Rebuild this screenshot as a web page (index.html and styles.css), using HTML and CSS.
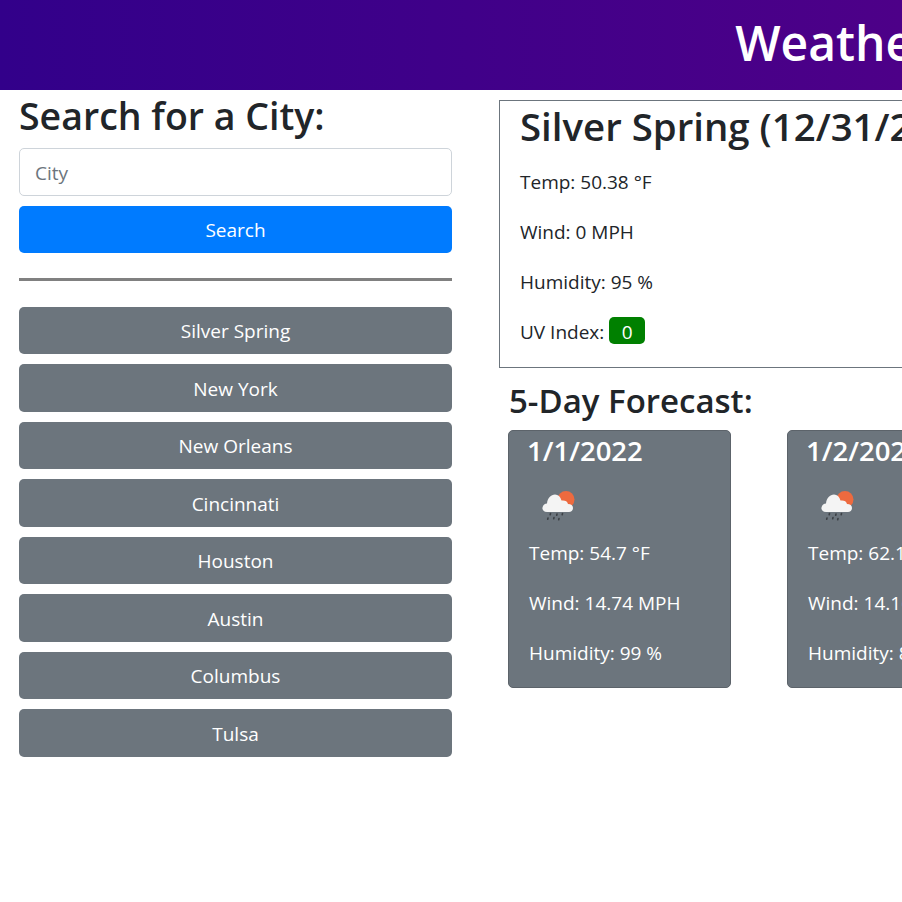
FILE: index.html
```html
<!DOCTYPE html>
<html lang="en">
<head>
    <meta charset="UTF-8">
    <meta name="viewport" content="width=device-width, initial-scale=1.0">
    <title>Weather Dashboard</title>
    <link rel="stylesheet" href="styles.css">
</head>
<body>

    <!-- ======= Header ======= -->
    <header class="page-header">
        <h1>Weather Dashboard</h1>
    </header>

    <main class="page-main">
        <!-- ======= Search ======= -->
        <section class="search-col">
            <h2 class="search-title">Search for a City:</h2>
            <form class="search-form">
                <input class="city-input" type="text" placeholder="City">
                <button class="btn btn-blue" type="button">Search</button>
            </form>
            <hr class="divider">
            <div class="history">
                <button class="btn btn-grey" type="button">Silver Spring</button>
                <button class="btn btn-grey" type="button">New York</button>
                <button class="btn btn-grey" type="button">New Orleans</button>
                <button class="btn btn-grey" type="button">Cincinnati</button>
                <button class="btn btn-grey" type="button">Houston</button>
                <button class="btn btn-grey" type="button">Austin</button>
                <button class="btn btn-grey" type="button">Columbus</button>
                <button class="btn btn-grey" type="button">Tulsa</button>
            </div>
        </section>

        <!-- ======= Weather ======= -->
        <section class="weather-col">
            <div class="current">
                <h2 class="current-title">Silver Spring (12/31/2021)</h2>
                <p>Temp: 50.38 °F</p>
                <p>Wind: 0 MPH</p>
                <p>Humidity: 95 %</p>
                <p>UV Index: <span class="uv">0</span></p>
            </div>

            <h3 class="forecast-title">5-Day Forecast:</h3>
            <div class="forecast">
                <div class="card">
                    <h3 class="card-date">1/1/2022</h3>
                    <svg class="card-icon" viewBox="0 0 50 50">
                        <use href="#rain-icon"></use>
                    </svg>
                    <p>Temp: 54.7 °F</p>
                    <p>Wind: 14.74 MPH</p>
                    <p>Humidity: 99 %</p>
                </div>
                <div class="card">
                    <h3 class="card-date">1/2/2022</h3>
                    <svg class="card-icon" viewBox="0 0 50 50">
                        <use href="#rain-icon"></use>
                    </svg>
                    <p>Temp: 62.1 °F</p>
                    <p>Wind: 14.16 MPH</p>
                    <p>Humidity: 89 %</p>
                </div>
            </div>
        </section>
    </main>

    <svg class="icon-defs" width="0" height="0">
        <symbol id="rain-icon" viewBox="0 0 50 50">
            <circle cx="38" cy="19.500" r="8.500" fill="#ed6a3f"/>
            <path d="M19 32C15.500 32 14 29.500 14.500 27.500 15 25 17 23.500 19 23.500 19.500 18 23 14.500 27 14.500 30 14.500 32.500 16.500 33.500 20.500 36.500 20 39.500 21 40 24 43 24 45 25.500 45 28 45 30.500 43 32 41 32Z" fill="#f4f4f4"/>
            <path d="M22.500 33.500l-.3 1.200M29 34l-.3 1.200M34.500 33.500l-.3 1.200M20 38l-.3 1.200M26 37.500l-.3 1.200M31 38.500l-.3 1.200" stroke="#3c4045" stroke-width="1.600" stroke-linecap="round" fill="none"/>
        </symbol>
    </svg>
</body>
</html>
```

FILE: styles.css
```css
html {
    overflow: hidden;
}

body {
    font-family: "Open Sans", Arial, sans-serif;
    margin: 0;
    width: 1936px;
    color: #212529;
    background-color: white;
}

h1, h2, h3, p {
    margin: 0;
}

.page-header {
    height: 90px;
    display: flex;
    align-items: center;
    justify-content: center;
    color: white;
    background: linear-gradient(to right, #32008a, #4d0088 902px);
}

.page-header h1 {
    font-size: 48px;
    font-weight: 600;
    line-height: 1.2;
    margin-bottom: 4px;
}

.page-main {
    display: flex;
}

/* ======= Search ======= */
.search-col {
    width: 433px;
    padding: 1px 20px 0 19px;
    flex-shrink: 0;
}

.search-title {
    font-size: 37.5px;
    font-weight: 600;
    line-height: 50px;
    margin-bottom: 7px;
}

.search-form {
    display: flex;
    flex-direction: column;
    gap: 10px;
}

.city-input {
    height: 48px;
    box-sizing: border-box;
    padding: 10px 15px 8px;
    font-family: inherit;
    font-size: 19px;
    border: 1px solid #ced4da;
    border-radius: 5px;
}

.city-input::placeholder {
    color: #6c757d;
}

.btn {
    display: block;
    width: 100%;
    height: 47.5px;
    padding: 1px 16px 0;
    font-family: inherit;
    font-size: 19px;
    color: white;
    border: none;
    border-radius: 5px;
}

.btn-blue {
    height: 47.25px;
    background-color: #007bff;
}

.btn-grey {
    background-color: #6c757d;
}

.divider {
    height: 3px;
    margin: 25px 0 25.5px;
    border: none;
    background-color: #808080;
}

.history {
    display: flex;
    flex-direction: column;
    gap: 10px;
}

/* ======= Weather ======= */
.weather-col {
    padding: 10px 0 0 27px;
    flex-grow: 1;
}

.current {
    border: 1px solid #6c757d;
    padding: 1px 20px 0;
    height: 265px;
}

.current-title {
    font-size: 38.4px;
    font-weight: 600;
    line-height: 48px;
    margin-bottom: 17px;
    white-space: nowrap;
}

.current p,
.card p {
    font-size: 19px;
    line-height: 30px;
    margin-bottom: 20px;
}

.uv {
    display: inline-block;
    min-width: 36px;
    margin-top: -2px;
    padding-top: 3px;
    text-align: center;
    line-height: 24px;
    color: white;
    background-color: green;
    border-radius: 5px;
}

.forecast-title {
    font-size: 33px;
    font-weight: 600;
    line-height: 38px;
    margin: 14px 0 10px 10px;
}

.forecast {
    display: flex;
    gap: 56px;
    margin-left: 9px;
}

.card {
    width: 223px;
    height: 258px;
    box-sizing: border-box;
    padding: 1px 20px 0;
    color: white;
    background-color: #6c757d;
    border: 1px solid #5c636a;
    border-radius: 5px;
}

.card .card-date {
    font-size: 27.5px;
    font-weight: 600;
    line-height: 38px;
    margin-left: -2px;
}

.card-icon {
    display: block;
    width: 50px;
    height: 50px;
    margin: 10px 0 8px -1px;
}

.icon-defs {
    position: absolute;
}
```
